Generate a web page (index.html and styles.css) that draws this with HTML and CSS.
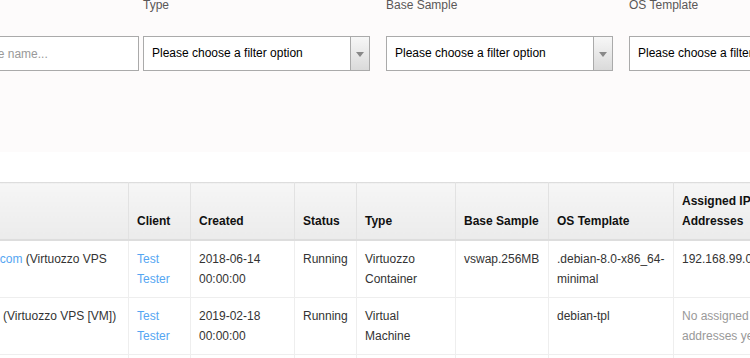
FILE: index.html
```html
<!DOCTYPE html>
<html lang="en">
<head>
    <meta charset="UTF-8">
    <title>Services</title>
    <link rel="stylesheet" href="styles.css">
</head>
<body>
    <div class="filter-panel">
        <div class="filter-row">
            <div class="filter">
                <label class="filter-label">Name</label>
                <input type="text" class="name-input" placeholder="Search by service name...">
            </div>
            <div class="filter">
                <label class="filter-label">Type</label>
                <div class="fake-select">
                    <span class="fake-select-text">Please choose a filter option</span>
                    <span class="fake-select-arrow"><b></b></span>
                </div>
            </div>
            <div class="filter">
                <label class="filter-label">Base Sample</label>
                <div class="fake-select">
                    <span class="fake-select-text">Please choose a filter option</span>
                    <span class="fake-select-arrow"><b></b></span>
                </div>
            </div>
            <div class="filter">
                <label class="filter-label">OS Template</label>
                <div class="fake-select">
                    <span class="fake-select-text">Please choose a filter option</span>
                    <span class="fake-select-arrow"><b></b></span>
                </div>
            </div>
        </div>
    </div>

    <div class="table-wrap">
        <table class="services">
            <thead>
                <tr>
                    <th class="c-name">Service</th>
                    <th class="c-client">Client</th>
                    <th class="c-created">Created</th>
                    <th class="c-status">Status</th>
                    <th class="c-type">Type</th>
                    <th class="c-sample">Base Sample</th>
                    <th class="c-os">OS Template</th>
                    <th class="c-ip">Assigned IP Addresses</th>
                </tr>
            </thead>
            <tbody>
                <tr>
                    <td><a href="#">vps101.example.com</a> (Virtuozzo VPS [CT])</td>
                    <td><a href="#">Test Tester</a></td>
                    <td>2018-06-14 00:00:00</td>
                    <td>Running</td>
                    <td>Virtuozzo Container</td>
                    <td>vswap.256MB</td>
                    <td>.debian-8.0-x86_64-minimal</td>
                    <td>192.168.99.0</td>
                </tr>
                <tr>
                    <td><a href="#">vm.example.com</a> (Virtuozzo VPS [VM])</td>
                    <td><a href="#">Test Tester</a></td>
                    <td>2019-02-18 00:00:00</td>
                    <td>Running</td>
                    <td>Virtual Machine</td>
                    <td></td>
                    <td>debian-tpl</td>
                    <td class="muted">No assigned addresses yet</td>
                </tr>
                <tr>
                    <td><a href="#">ct7.example.com</a> (Virtuozzo VPS [CT])</td>
                    <td><a href="#">Test Tester</a></td>
                    <td>2019-03-02 00:00:00</td>
                    <td>Stopped</td>
                    <td>Virtuozzo Container</td>
                    <td>vswap.512MB</td>
                    <td>centos-7-x86_64</td>
                    <td>192.168.99.11</td>
                </tr>
            </tbody>
        </table>
    </div>
</body>
</html>
```

FILE: styles.css
```css
body {
    margin: 0;
    padding: 0;
    background: #ffffff;
    font-family: "Liberation Sans", Arial, sans-serif;
    font-size: 12px;
    color: #333;
    overflow: hidden;
}

/* filter panel */
.filter-panel {
    height: 152px;
    background: #fdfbfb;
    overflow: hidden;
}

.filter-row {
    display: flex;
    margin: -5px 0 0 -100px;
}

.filter {
    width: 243px;
    flex: none;
}

.filter-label {
    display: block;
    line-height: 20px;
    margin-bottom: 21px;
    color: #5a5757;
}

.name-input {
    box-sizing: border-box;
    width: 239px;
    height: 35px;
    padding: 0 8px;
    border: 1px solid #aaa;
    font-family: inherit;
    font-size: 12px;
    color: #000;
    background: #fff;
}

.name-input::placeholder {
    color: #999;
}

.fake-select {
    box-sizing: border-box;
    display: flex;
    width: 227px;
    height: 35px;
    border: 1px solid #aaa;
    background: #fff;
}

.fake-select-text {
    flex: 1;
    padding-left: 8px;
    line-height: 33px;
    color: #000;
    white-space: nowrap;
    overflow: hidden;
}

.fake-select-arrow {
    width: 18px;
    border-left: 1px solid #aaa;
    background: linear-gradient(#f7f7f7, #dadada);
    display: flex;
    align-items: center;
    justify-content: center;
}

.fake-select-arrow b {
    width: 0;
    height: 0;
    border-left: 4px solid transparent;
    border-right: 4px solid transparent;
    border-top: 5px solid #888;
    margin-top: 2px;
}

/* table */
.table-wrap {
    margin-top: 30px;
    overflow: hidden;
}

.services {
    margin-left: -100px;
    border-collapse: collapse;
    table-layout: fixed;
    width: 893px;
    border-top: 1px solid #ddd;
}

.services th,
.services td {
    box-sizing: border-box;
    padding: 8px;
    line-height: 20px;
    text-align: left;
}

.services th {
    vertical-align: bottom;
    font-weight: bold;
    color: #111;
    background: linear-gradient(#f6f6f6, #ebebeb);
    border-left: 1px solid #e2e2e2;
    border-right: 1px solid #e2e2e2;
    border-bottom: 2px solid #ddd;
}

.services td {
    vertical-align: top;
    border: 1px solid #eee;
}

.services a {
    color: #55a6f2;
    text-decoration: none;
}

.services .muted {
    color: #999;
}

.c-name { width: 228px; }
.c-client { width: 62px; }
.c-created { width: 104px; }
.c-status { width: 62px; }
.c-type { width: 99px; }
.c-sample { width: 93px; }
.c-os { width: 125px; }
.c-ip { width: 120px; }
```
